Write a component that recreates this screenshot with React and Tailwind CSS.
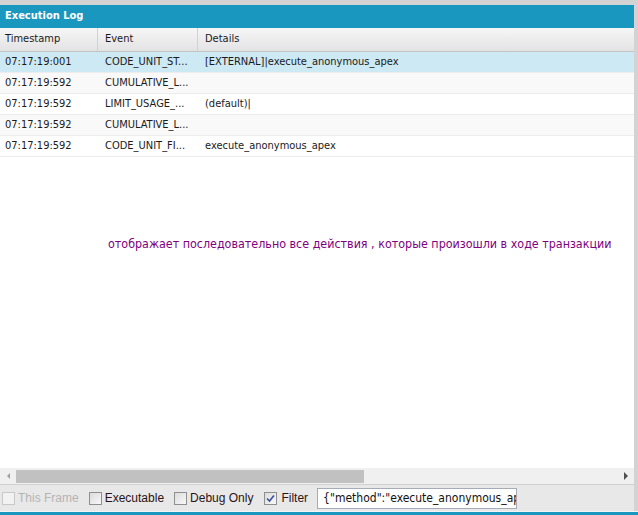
import React from 'react';

const grid = '"DejaVu Sans Condensed", "DejaVu Sans", sans-serif';

const rows = [
    { time: '07:17:19:001', event: 'CODE_UNIT_ST...', details: '[EXTERNAL]|execute_anonymous_apex', bg: 'bg-[#cde9f4]' },
    { time: '07:17:19:592', event: 'CUMULATIVE_L...', details: '', bg: 'bg-[#f9f9f9]' },
    { time: '07:17:19:592', event: 'LIMIT_USAGE_...', details: '(default)|', bg: 'bg-white' },
    { time: '07:17:19:592', event: 'CUMULATIVE_L...', details: '', bg: 'bg-[#f9f9f9]' },
    { time: '07:17:19:592', event: 'CODE_UNIT_FI...', details: 'execute_anonymous_apex', bg: 'bg-white' },
];

const Checkbox = ({ checked, disabled }) => (
    <span
        className={`w-[13px] h-[13px] border flex items-center justify-center ${
            disabled ? 'border-[#c8c8c8] bg-[#f2f2f2]' : 'border-[#8e8f8f] bg-gradient-to-br from-[#dcdcdc] to-[#f8f8f8]'
        }`}
    >
        {checked && (
            <svg width="9" height="9" viewBox="0 0 9 9">
                <path d="M1 4.5 L3.5 7 L8 1.5" fill="none" stroke="#3a4fa0" strokeWidth="1.6" />
            </svg>
        )}
    </span>
);

const App = () => {
    return (
        <div className="w-[638px] h-[515px] bg-[#d3d3d3] flex flex-col overflow-hidden">
            <div className="flex-1 flex flex-col pt-[5px] pr-[4px] min-h-0">
                <div className="flex-1 flex flex-col bg-white min-h-0" style={{ fontFamily: grid }}>
                    {/* title bar */}
                    <div className="h-[23px] bg-[#1a97bf] text-white font-bold text-[11px] px-[5px] flex items-center">
                        Execution Log
                    </div>

                    {/* column headers */}
                    <div className="h-[24px] flex bg-gradient-to-b from-[#f6f6f6] to-[#e3e3e5] border-b border-[#c3c3c3] text-[11px] text-[#1a1a1a]">
                        <div className="w-[98px] border-r border-[#d2d2d2] px-[5px] flex items-center">Timestamp</div>
                        <div className="w-[100px] border-r border-[#d2d2d2] px-[7px] flex items-center">Event</div>
                        <div className="flex-1 px-[7px] flex items-center">Details</div>
                    </div>

                    {/* rows */}
                    {rows.map((r, i) => (
                        <div key={i} className={`h-[21px] flex border-b border-[#ededed] text-[11px] text-[#1a1a1a] ${r.bg}`}>
                            <div className="w-[98px] px-[5px] flex items-center">{r.time}</div>
                            <div className="w-[100px] px-[7px] flex items-center whitespace-nowrap overflow-hidden">{r.event}</div>
                            <div className="flex-1 px-[7px] flex items-center whitespace-nowrap">{r.details}</div>
                        </div>
                    ))}

                    {/* empty area with note */}
                    <div className="flex-1 pl-[108px] pt-[78px]">
                        <p className="text-[12.4px] text-[#800080] whitespace-nowrap">
                            отображает последовательно все действия , которые произошли в ходе транзакции
                        </p>
                    </div>

                    {/* horizontal scrollbar */}
                    <div className="h-[16px] bg-[#f0f0f0] flex items-center">
                        <div className="w-[16px] flex justify-center">
                            <span className="w-0 h-0 border-y-[3px] border-y-transparent border-r-[3px] border-r-[#a0a0a0]" />
                        </div>
                        <div className="w-[348px] h-[13px] bg-[#c1c1c1]" />
                        <div className="flex-1" />
                        <div className="w-[16px] flex justify-center">
                            <span className="w-0 h-0 border-y-[4px] border-y-transparent border-l-[4px] border-l-[#505050]" />
                        </div>
                    </div>

                    {/* toolbar */}
                    <div
                        className="h-[27px] bg-[#e8e8e8] border-t border-[#d0d0d0] flex items-center text-[12px]"
                        style={{ fontFamily: '"Liberation Sans", Arial, sans-serif' }}
                    >
                        <div className="flex items-center gap-[3px] pl-[2px] text-[#b4b4b4]">
                            <Checkbox disabled />
                            <span>This Frame</span>
                        </div>
                        <div className="flex items-center gap-[3px] ml-[10px] text-[#2a1414]">
                            <Checkbox />
                            <span>Executable</span>
                        </div>
                        <div className="flex items-center gap-[3px] ml-[10px] text-[#2a1414]">
                            <Checkbox />
                            <span>Debug Only</span>
                        </div>
                        <div className="flex items-center gap-[4px] ml-[11px] text-[#2a1414]">
                            <Checkbox checked />
                            <span>Filter</span>
                        </div>
                        <div
                            className="ml-[9px] w-[200px] h-[21px] bg-white border border-[#a6abb8] pl-[5px] flex items-center text-[12px] text-[#111] overflow-hidden whitespace-nowrap"
                            style={{ fontFamily: grid }}
                        >
                            {'{"method":"execute_anonymous_ap'}
                        </div>
                    </div>
                </div>
            </div>
            <div className="h-[1px] bg-[#f4f4f4]" />
            <div className="h-[3px] bg-[#1a97bf]" />
        </div>
    );
};

export default App;
